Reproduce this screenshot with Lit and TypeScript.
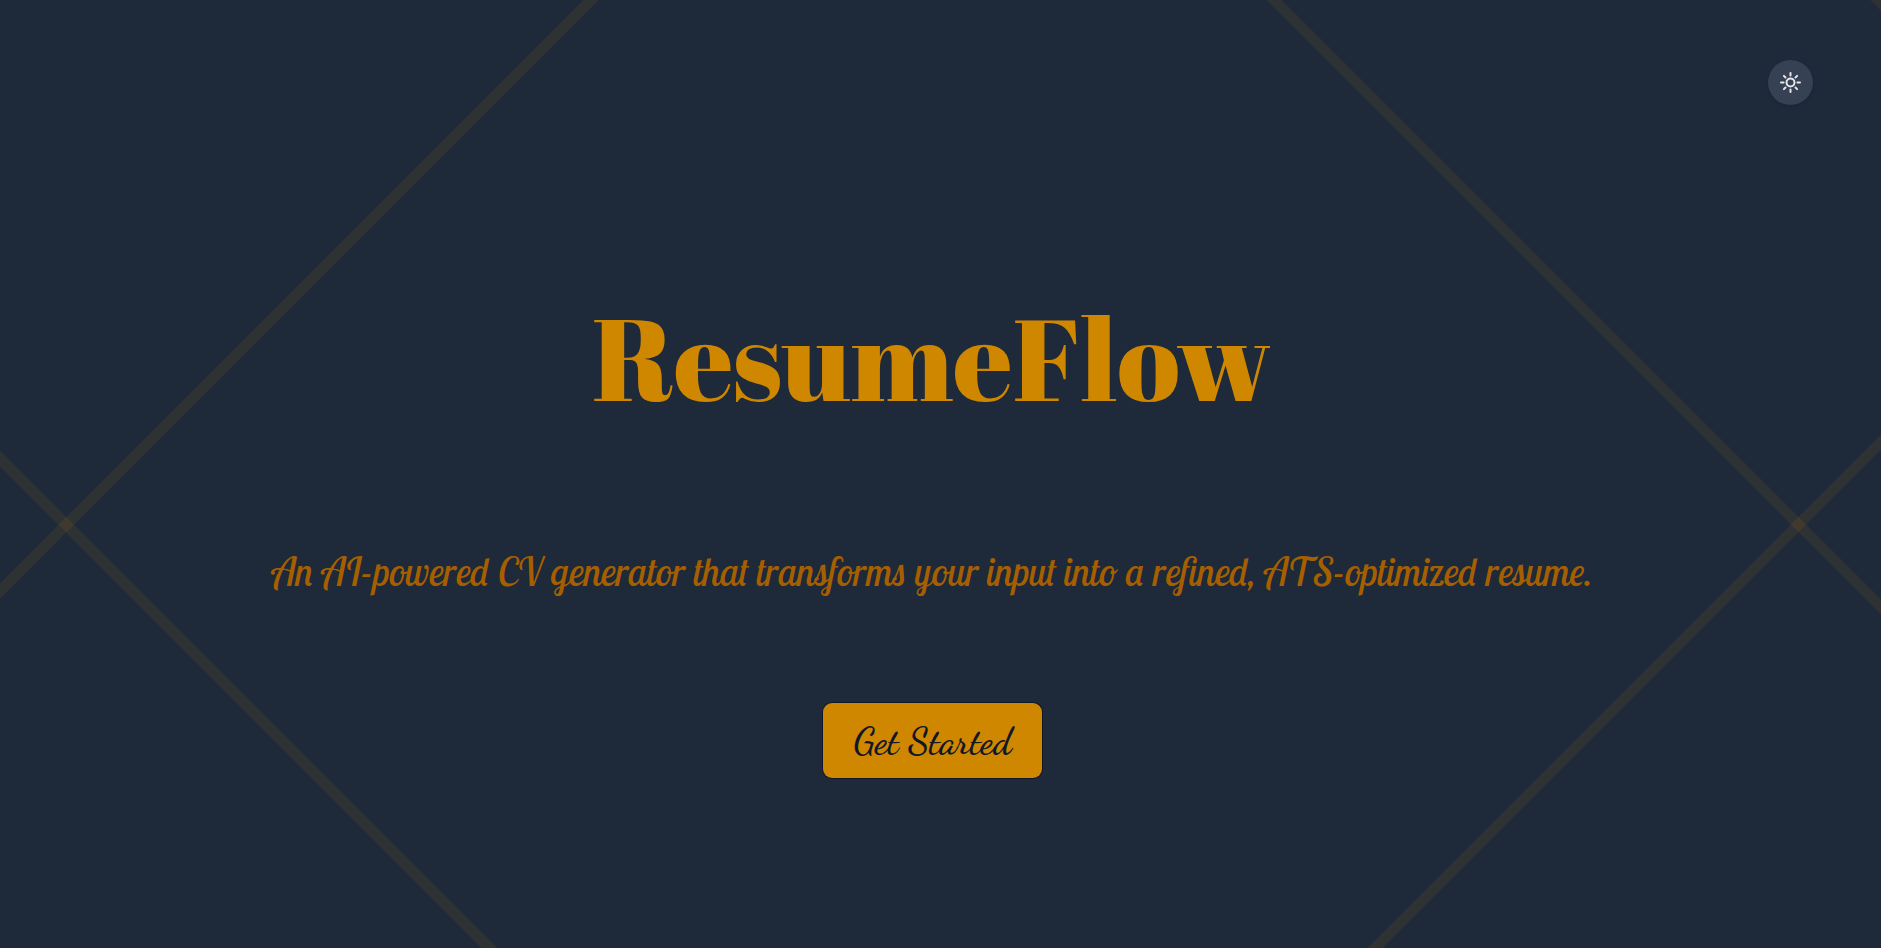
import { LitElement, html, css } from "lit";
import { customElement } from "lit/decorators.js";

@customElement("app-root")
export class AppRoot extends LitElement {
  static styles = css`
    :host {
      display: block;
      position: relative;
      height: 948px;
      overflow: hidden;
      background: #1e2939;
    }
    .lattice {
      position: absolute;
      inset: 0;
      width: 1881px;
      height: 948px;
      stroke: #d08700;
      stroke-opacity: 0.1;
      stroke-width: 11;
    }
    .toggle {
      position: absolute;
      top: 60px;
      left: 1768px;
      width: 45px;
      height: 45px;
      padding: 0;
      border: 0;
      border-radius: 50%;
      background: #364153;
      box-shadow: 0 1px 3px rgba(0, 0, 0, 0.12);
      display: grid;
      place-items: center;
    }
    .sun {
      display: block;
      fill: none;
      stroke: #e5e7eb;
      stroke-width: 2;
      stroke-linecap: round;
    }
    .hero {
      position: relative;
      width: 1865px;
      padding-top: 287px;
      display: flex;
      flex-direction: column;
      align-items: center;
    }
    h1,
    p {
      margin: 0;
      white-space: nowrap;
    }
    h1 {
      font: 400 115.2px/140px "Abril Fatface", "Liberation Serif", serif;
      color: #d08700;
    }
    p {
      margin-top: 110px;
      font: italic 400 38.4px/70px "Lobster Two", Lobster, Lato, sans-serif;
      color: #a65f00;
    }
    .start {
      margin-top: 96px;
      width: 219px;
      height: 75px;
      padding: 0;
      border: 0;
      border-radius: 9px;
      background: #d08700;
      box-shadow: 0 0 0 1px #101828;
      font: 600 37.6px/74px "Dancing Script", "Liberation Serif", serif;
      color: #101828;
    }
  `;

  render() {
    return html`
      <svg class="lattice" viewBox="0 0 1881 948" aria-hidden="true">
        <path d="M611 -20L-20 611" />
        <path d="M2343 -20L1355 968" />
        <path d="M-20 438.5L510 968.5" />
        <path d="M1254 -20L1901 627" />
        <path d="M1858 -20L1901 23" />
      </svg>
      <main class="hero">
        <h1>ResumeFlow</h1>
        <p>An AI-powered CV generator that transforms your input into a refined, ATS-optimized resume.</p>
        <button class="start">Get Started</button>
      </main>
      <button class="toggle" aria-label="Toggle theme">
        <svg class="sun" width="23" height="23" viewBox="-11.5 -11.5 23 23">
          <circle r="4" />
          <path
            d="M0 -9.5V-6.9M0 9.5V6.9M-9.5 0H-6.9M9.5 0H6.9M-6.6 -6.6L-5 -5M6.6 6.6L5 5M-6.6 6.6L-5 5M6.6 -6.6L5 -5"
          />
        </svg>
      </button>
    `;
  }
}
